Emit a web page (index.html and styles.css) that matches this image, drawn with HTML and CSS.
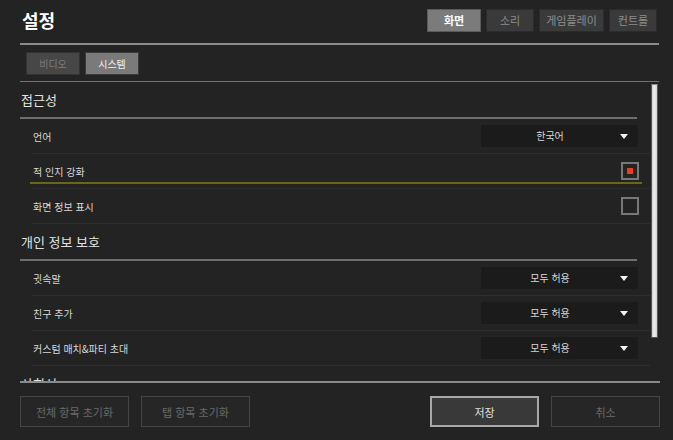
FILE: index.html
```html
<!DOCTYPE html>
<html lang="ko">
<head>
	<meta charset="UTF-8">
	<title>설정</title>
	<link rel="stylesheet" href="styles.css">
</head>
<body>
	<div class="panel">
		<header class="top">
			<h1 class="title">설정</h1>
			<nav class="tabs">
				<span class="tab active w54">화면</span>
				<span class="tab w48">소리</span>
				<span class="tab w65">게임플레이</span>
				<span class="tab w48">컨트롤</span>
			</nav>
		</header>

		<nav class="subtabs">
			<span class="subtab">비디오</span>
			<span class="subtab active">시스템</span>
		</nav>

		<div class="content">
			<div class="list">
				<div class="section">접근성</div>
				<div class="row">
					<span class="label">언어</span>
					<span class="select">한국어</span>
				</div>
				<div class="row focus">
					<span class="label">적 인지 강화</span>
					<span class="check on"></span>
				</div>
				<div class="row">
					<span class="label">화면 정보 표시</span>
					<span class="check"></span>
				</div>

				<div class="section">개인 정보 보호</div>
				<div class="row">
					<span class="label">귓속말</span>
					<span class="select">모두 허용</span>
				</div>
				<div class="row">
					<span class="label">친구 추가</span>
					<span class="select">모두 허용</span>
				</div>
				<div class="row">
					<span class="label">커스텀 매치&amp;파티 초대</span>
					<span class="select">모두 허용</span>
				</div>

				<div class="section">사회성</div>
			</div>
			<div class="scroll"><div class="thumb"></div></div>
		</div>

		<footer class="bottom">
			<button class="btn dim">전체 항목 초기화</button>
			<button class="btn dim">탭 항목 초기화</button>
			<span class="spacer"></span>
			<button class="btn primary">저장</button>
			<button class="btn dim">취소</button>
		</footer>
	</div>
</body>
</html>
```

FILE: styles.css
```css
html, body {
	margin: 0;
	padding: 0;
}
body {
	background: #232323;
	color: #d6d6d6;
	font-family: "Noto Sans CJK KR", "Noto Sans", sans-serif;
	font-size: 11px;
	height: 440px;
	overflow: hidden;
}
.panel {
	margin-left: 20px;
	width: 639px;
}

/* header */
.top {
	height: 43px;
	display: flex;
	align-items: flex-start;
	border-bottom: 2px solid #8a8a8a;
}
.title {
	margin: 8px 0 0 2px;
	font-size: 18px;
	font-weight: 700;
	color: #fff;
	line-height: 24px;
}
.tabs {
	margin-left: auto;
	margin-right: 2px;
	margin-top: 9px;
	display: flex;
	gap: 5px;
}
.tab {
	box-sizing: border-box;
	height: 23px;
	line-height: 21px;
	text-align: center;
	background: #3a3a3a;
	border: 1px solid #2b2b2b;
	color: #8c8c8c;
	font-size: 11px;
}
.w54 { width: 54px; }
.w48 { width: 48px; }
.w65 { width: 65px; }
.tab.active {
	background: #7b7b7b;
	border-color: #5a5a5a;
	color: #fff;
	font-weight: 700;
}

/* sub tabs */
.subtabs {
	height: 37px;
	padding: 7px 0 0 6px;
	box-sizing: border-box;
	display: flex;
	align-items: flex-start;
	gap: 5px;
	border-bottom: 1px solid #727272;
}
.subtab {
	box-sizing: border-box;
	width: 54px;
	height: 23px;
	line-height: 21px;
	text-align: center;
	background: #474747;
	border: 1px solid #333;
	color: #7c7c7c;
	font-size: 10px;
}
.subtab.active {
	background: #7a7a7a;
	border-color: #3a3a3a;
	color: #f0f0f0;
}

/* scrolling list */
.content {
	height: 299px;
	display: flex;
	overflow: hidden;
}
.list {
	width: 631px;
}
.section {
	height: 35px;
	line-height: 35px;
	margin-right: 13px;
	padding-left: 1px;
	border-bottom: 2px solid #6e6e6e;
	font-size: 13px;
	color: #e2e2e2;
}
.row {
	position: relative;
	height: 34px;
	margin-left: 12px;
	padding: 0 12px 0 1px;
	display: flex;
	align-items: center;
	border-bottom: 1px solid #2e2e2e;
}
.label {
	font-size: 10px;
	color: #d8d8d8;
}
.row.focus::after {
	content: "";
	position: absolute;
	left: -2px;
	right: 8px;
	bottom: 4px;
	height: 2px;
	background: #6a6619;
}
.select {
	margin-left: auto;
	width: 138px;
	padding-right: 19px;
	height: 22px;
	line-height: 22px;
	text-align: center;
	background: #1b1b1b;
	color: #d8d8d8;
	font-size: 10px;
	position: relative;
}
.select::after {
	content: "";
	position: absolute;
	right: 10px;
	top: 9px;
	border-left: 4px solid transparent;
	border-right: 4px solid transparent;
	border-top: 5px solid #f2f2f2;
}
.check {
	margin-left: auto;
	margin-right: -1px;
	width: 14px;
	height: 14px;
	border: 2px solid #777;
	display: flex;
	align-items: center;
	justify-content: center;
}
.check.on::before {
	content: "";
	width: 6px;
	height: 6px;
	background: #ee3d17;
}
.scroll {
	width: 8px;
	padding: 2px 0 0 1px;
}
.thumb {
	width: 5px;
	height: 252px;
	background: linear-gradient(to right, #c8c8c8, #f2f2f2 40%, #d2d2d2);
	border: 1px solid #555;
	border-top-color: #8a8a8a;
}

/* footer */
.bottom {
	border-top: 2px solid #8a8a8a;
	padding-top: 13px;
	display: flex;
	gap: 12px;
	width: 640px;
}
.spacer {
	flex: 1;
}
.btn {
	width: 109px;
	height: 31px;
	background: #262626;
	border: 1px solid #454545;
	color: #6a6a6a;
	font-family: inherit;
	font-size: 11px;
	padding: 0;
}
.btn.primary {
	background: #393939;
	border: 2px solid #a8a8a8;
	color: #e0e0e0;
}
```
